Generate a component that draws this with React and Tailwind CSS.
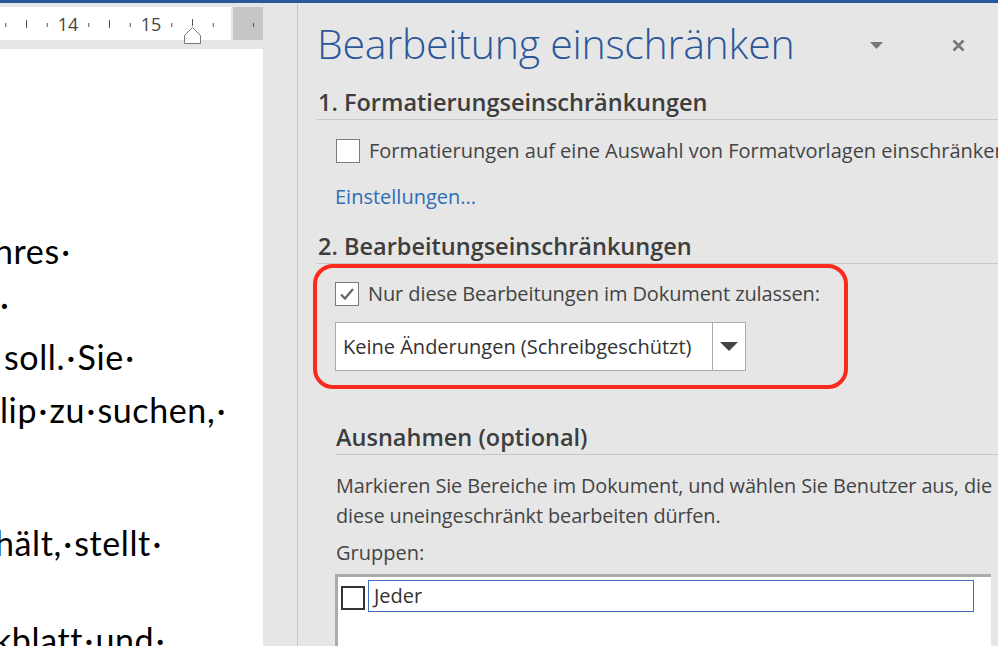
import React from 'react'

const dot = '\u00B7'

function Ruler() {
  // tick marks of the horizontal ruler
  const small = [5.75, 47.25, 88.75, 130.25, 171.75, 213.25]
  const medium = [26.5, 109.5]
  return (
    <svg width="231" height="42" viewBox="0 0 231 42" className="absolute left-0 top-0 overflow-visible">
      {small.map((x) => (
        <line key={x} x1={x} y1="16" x2={x} y2="20" stroke="#555" strokeWidth="1" />
      ))}
      {medium.map((x) => (
        <line key={x} x1={x} y1="13" x2={x} y2="21" stroke="#555" strokeWidth="1" />
      ))}
      <text x="68" y="24" textAnchor="middle" fontSize="18" fill="#444" fontFamily="Open Sans, Noto Sans, sans-serif">14</text>
      <text x="151" y="24" textAnchor="middle" fontSize="18" fill="#444" fontFamily="Open Sans, Noto Sans, sans-serif">15</text>
      <line x1="192.5" y1="12" x2="192.5" y2="19" stroke="#555" strokeWidth="1" />
      <path d="M184.5 28.5 L192.5 20.5 L200.5 28.5 L200.5 36.5 L184.5 36.5 Z" fill="#fff" stroke="#777" strokeWidth="1" />
    </svg>
  )
}

function Checkbox({ checked }) {
  return (
    <div className="w-[24px] h-[24px] shrink-0 border border-[#7a7a7a] bg-white flex items-center justify-center">
      {checked && (
        <svg width="18" height="18" viewBox="0 0 18 18">
          <path d="M3 9.5 L7 13.5 L15 4" fill="none" stroke="#666" strokeWidth="2.2" />
        </svg>
      )}
    </div>
  )
}

function SectionHeading({ children, className = '' }) {
  return (
    <div className={`h-[33px] border-b border-[#c8c8c8] flex items-center text-[23.5px] font-semibold text-[#3d3d3d] whitespace-nowrap ${className}`}>
      {children}
    </div>
  )
}

// Word's visible space marker, a bit wider like a Calibri space
const Sp = () => <span className="mx-[1.5px]">{dot}</span>

export default function App() {
  return (
    <div className="w-[998px] h-[646px] overflow-hidden flex flex-col bg-[#e6e6e6]">
      <div className="h-[3px] bg-[#2b579a] shrink-0" />
      <div className="flex flex-1 min-h-0">
        {/* Document side */}
        <div className="w-[297px] shrink-0 flex flex-col">
          <div className="h-[46px] shrink-0 pt-[4px]">
            <div className="flex h-[33px]">
              <div className="relative w-[231px] bg-white">
                <Ruler />
              </div>
              <div className="relative w-[30px] ml-[2px] bg-[#c6c6c6]">
                <div className="absolute left-[20px] top-[16px] w-px h-[4px] bg-[#555]" />
              </div>
            </div>
          </div>
          <div className="w-[263px] flex-1 bg-white overflow-hidden font-['Lato',sans-serif] text-[34px] text-black leading-[53px] whitespace-nowrap tracking-[0.6px]">
            <div className="mt-[175px] ml-[-6px]">hres<Sp /></div>
            <div className="ml-[0px]">{dot}</div>
            <div className="ml-[4px]">soll.<Sp />Sie<Sp /></div>
            <div className="ml-[0px]">lip<Sp />zu<Sp />suchen,<Sp /></div>
            <div className="mt-[80px] ml-[-5px]">hält,<Sp />stellt<Sp /></div>
            <div className="mt-[44px] ml-[-6px]">kblatt<Sp />und<Sp /></div>
          </div>
        </div>
        <div className="w-px shrink-0 bg-[#c6c6c6] mt-[1px]" />

        {/* Task pane */}
        <div className="flex-1 min-w-0 overflow-hidden pl-[19px] font-['Open_Sans','Noto_Sans',sans-serif] text-[#444]">
          <div className="h-[84px] flex items-center pr-[33px]">
            <div className="flex-1 text-[41px] font-light text-[#2b579a] whitespace-nowrap tracking-[-0.25px] pb-[2px]">
              Bearbeitung einschränken
            </div>
            <svg width="13" height="7" viewBox="0 0 13 7" className="shrink-0">
              <path d="M0 0 H13 L6.5 7 Z" fill="#777" />
            </svg>
            <svg width="13" height="13" viewBox="0 0 13 13" className="shrink-0 ml-[69px]">
              <path d="M1.5 1.5 L11.5 11.5 M11.5 1.5 L1.5 11.5" stroke="#777" strokeWidth="2.6" />
            </svg>
          </div>

          <SectionHeading className="pl-[1px]">1. Formatierungseinschränkungen</SectionHeading>

          <div className="mt-[19px] ml-[19px] flex items-center gap-[9px] h-[24px] text-[20px] whitespace-nowrap">
            <Checkbox />
            <span>Formatierungen auf eine Auswahl von Formatvorlagen einschränken</span>
          </div>

          <div className="mt-[22px] ml-[18px] h-[24px] flex items-center text-[20px] text-[#2f6db5]">
            Einstellungen...
          </div>

          <SectionHeading className="mt-[22px] pl-[1px]">2. Bearbeitungseinschränkungen</SectionHeading>

          <div className="ml-[-4px] w-[535px] border-[4px] border-[#fa2a1e] rounded-[20px] pl-[18px] pt-[14px] pb-[14px]">
            <div className="flex items-center gap-[9px] h-[24px] text-[20px] whitespace-nowrap tracking-[-0.1px]">
              <Checkbox checked />
              <span>Nur diese Bearbeitungen im Dokument zulassen:</span>
            </div>
            <div className="mt-[16px] w-[411px] h-[49px] bg-white border border-[#ababab] flex">
              <div className="flex-1 flex items-center pl-[7px] text-[20px] text-[#333] whitespace-nowrap">
                Keine Änderungen (Schreibgeschützt)
              </div>
              <div className="w-[33px] border-l border-[#ababab] flex items-center justify-center">
                <svg width="18" height="9" viewBox="0 0 18 9">
                  <path d="M0 0 H18 L9 9 Z" fill="#444" />
                </svg>
              </div>
            </div>
          </div>

          <SectionHeading className="mt-[33px] ml-[19px]">Ausnahmen (optional)</SectionHeading>

          <div className="mt-[16px] ml-[19px] text-[19.9px] leading-[30px] whitespace-nowrap tracking-[-0.1px]">
            Markieren Sie Bereiche im Dokument, und wählen Sie Benutzer aus, die
            <br />
            diese uneingeschränkt bearbeiten dürfen.
          </div>

          <div className="mt-[7px] ml-[19px] text-[20px] leading-[30px]">Gruppen:</div>

          <div className="mt-[6px] ml-[18px] w-[656px] h-[80px] bg-white border-t-[3px] border-l-[3px] border-[#ababab] pt-[3px] pl-[3px] flex gap-[3px]">
            <div className="w-[24px] h-[24px] mt-[6px] border-2 border-[#333] bg-white shrink-0" />
            <div className="w-[606px] h-[32px] border border-[#3f6fbf] flex items-center pl-[5px] text-[20px] text-[#333]">
              Jeder
            </div>
          </div>
        </div>
      </div>
    </div>
  )
}
